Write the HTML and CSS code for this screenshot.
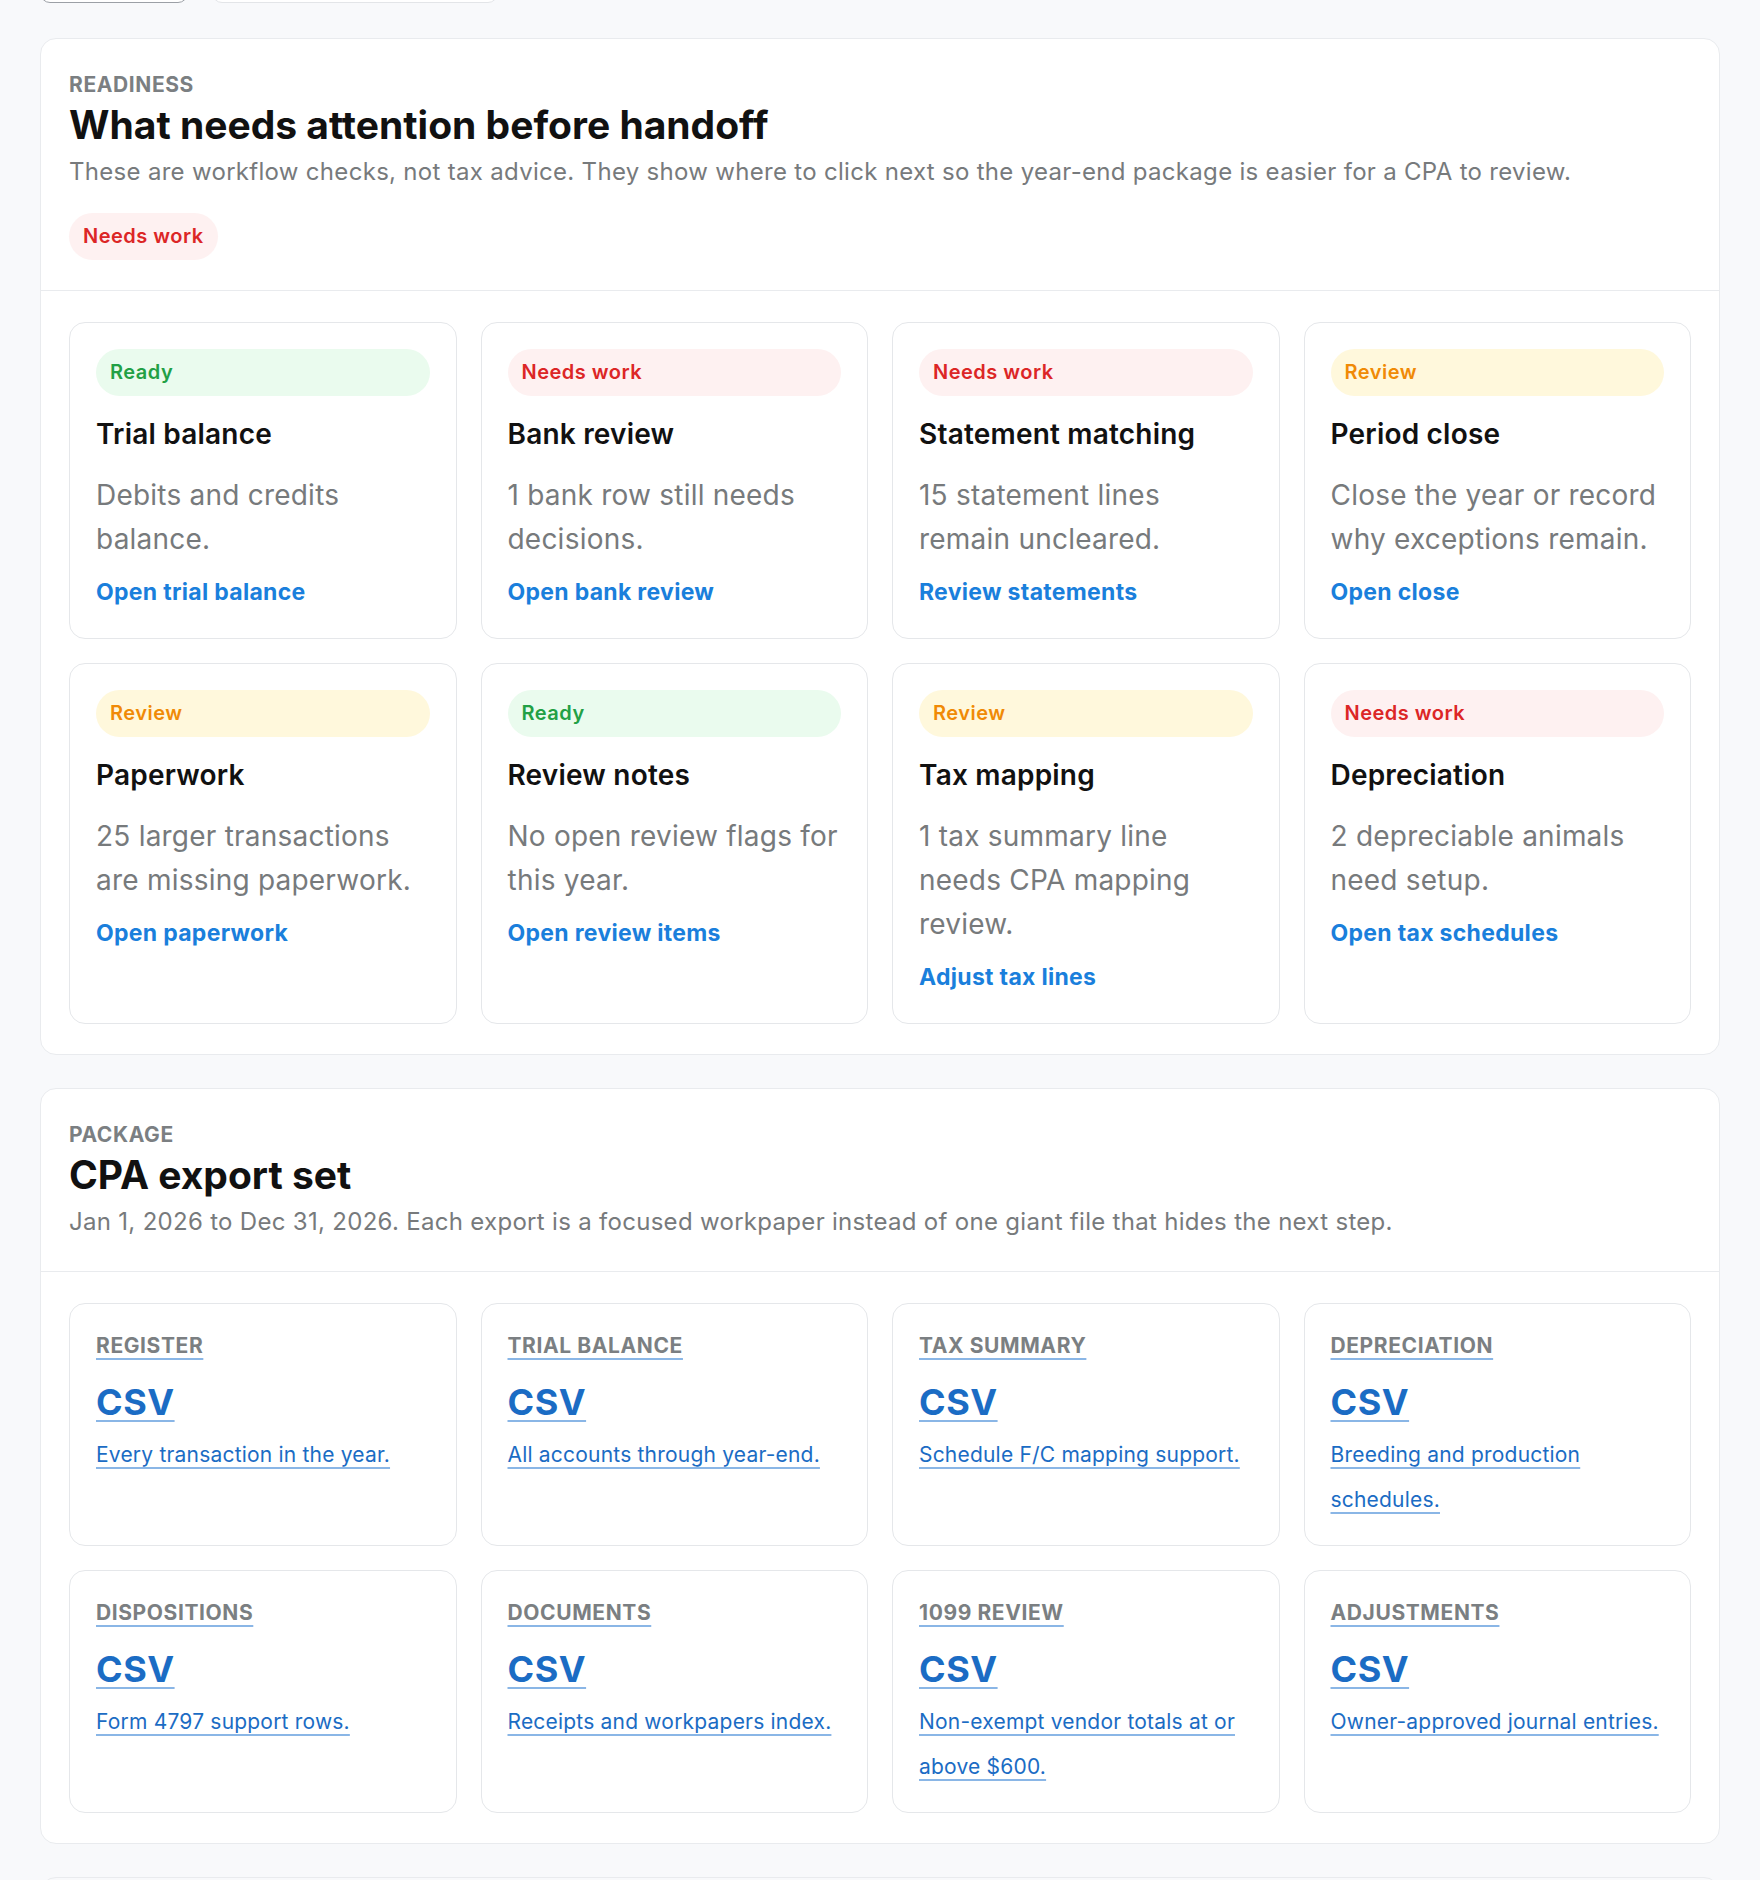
FILE: index.html
```
<!DOCTYPE html>
<html lang="en">
<head>
    <meta charset="UTF-8">
    <meta name="viewport" content="width=device-width, initial-scale=1.0">
    <title>Year-end handoff</title>
    <link rel="stylesheet" href="styles.css">
</head>
<body>
    <div class="toolbar">
        <button class="tool-btn active" aria-label="Back"></button>
        <button class="tool-btn wide" aria-label="Tax year"></button>
    </div>

    <section class="panel">
        <div class="panel-head">
            <div class="eyebrow">Readiness</div>
            <h2>What needs attention before handoff</h2>
            <p class="lead">These are workflow checks, not tax advice. They show where to click next so the year-end package is easier for a CPA to review.</p>
            <span class="badge bad">Needs work</span>
        </div>
        <div class="panel-body">
            <div class="grid">
                <div class="check">
                    <span class="pill ok">Ready</span>
                    <h3>Trial balance</h3>
                    <p>Debits and credits balance.</p>
                    <a href="#" class="next">Open trial balance</a>
                </div>
                <div class="check">
                    <span class="pill bad">Needs work</span>
                    <h3>Bank review</h3>
                    <p>1 bank row still needs decisions.</p>
                    <a href="#" class="next">Open bank review</a>
                </div>
                <div class="check">
                    <span class="pill bad">Needs work</span>
                    <h3>Statement matching</h3>
                    <p>15 statement lines remain uncleared.</p>
                    <a href="#" class="next">Review statements</a>
                </div>
                <div class="check">
                    <span class="pill warn">Review</span>
                    <h3>Period close</h3>
                    <p>Close the year or record why exceptions remain.</p>
                    <a href="#" class="next">Open close</a>
                </div>
                <div class="check">
                    <span class="pill warn">Review</span>
                    <h3>Paperwork</h3>
                    <p>25 larger transactions are missing paperwork.</p>
                    <a href="#" class="next">Open paperwork</a>
                </div>
                <div class="check">
                    <span class="pill ok">Ready</span>
                    <h3>Review notes</h3>
                    <p>No open review flags for this year.</p>
                    <a href="#" class="next">Open review items</a>
                </div>
                <div class="check">
                    <span class="pill warn">Review</span>
                    <h3>Tax mapping</h3>
                    <p>1 tax summary line needs CPA mapping review.</p>
                    <a href="#" class="next">Adjust tax lines</a>
                </div>
                <div class="check">
                    <span class="pill bad">Needs work</span>
                    <h3>Depreciation</h3>
                    <p>2 depreciable animals need setup.</p>
                    <a href="#" class="next">Open tax schedules</a>
                </div>
            </div>
        </div>
    </section>

    <section class="panel">
        <div class="panel-head">
            <div class="eyebrow">Package</div>
            <h2>CPA export set</h2>
            <p class="lead">Jan 1, 2026 to Dec 31, 2026. Each export is a focused workpaper instead of one giant file that hides the next step.</p>
        </div>
        <div class="panel-body">
            <div class="grid">
                <a href="#" class="export">
                    <span class="kind">Register</span>
                    <span class="fmt">CSV</span>
                    <span class="what">Every transaction in the year.</span>
                </a>
                <a href="#" class="export">
                    <span class="kind">Trial balance</span>
                    <span class="fmt">CSV</span>
                    <span class="what">All accounts through year-end.</span>
                </a>
                <a href="#" class="export">
                    <span class="kind">Tax summary</span>
                    <span class="fmt">CSV</span>
                    <span class="what">Schedule F/C mapping support.</span>
                </a>
                <a href="#" class="export">
                    <span class="kind">Depreciation</span>
                    <span class="fmt">CSV</span>
                    <span class="what">Breeding and production schedules.</span>
                </a>
                <a href="#" class="export">
                    <span class="kind">Dispositions</span>
                    <span class="fmt">CSV</span>
                    <span class="what">Form 4797 support rows.</span>
                </a>
                <a href="#" class="export">
                    <span class="kind">Documents</span>
                    <span class="fmt">CSV</span>
                    <span class="what">Receipts and workpapers index.</span>
                </a>
                <a href="#" class="export">
                    <span class="kind">1099 review</span>
                    <span class="fmt">CSV</span>
                    <span class="what">Non-exempt vendor totals at or above $600.</span>
                </a>
                <a href="#" class="export">
                    <span class="kind">Adjustments</span>
                    <span class="fmt">CSV</span>
                    <span class="what">Owner-approved journal entries.</span>
                </a>
            </div>
        </div>
    </section>

    <section class="panel stub"></section>
</body>
</html>
```

FILE: styles.css
```
body {
    font-family: Inter, "Noto Sans", sans-serif;
    background-color: #f8f9fb;
    margin: 0;
    padding: 0 40px 0 40px;
    color: #111;
}
.toolbar {
    display: flex;
    gap: 24px;
    margin-top: -40px;
    height: 43px;
}
.tool-btn {
    width: 148px;
    height: 43px;
    border: 1px solid #e3e5e8;
    border-radius: 10px;
    background: #fff;
}
.tool-btn.active {
    border-color: #9ca0a6;
}
.tool-btn.wide {
    width: 286px;
}
.panel {
    background: #fff;
    border: 1px solid #e9ebee;
    border-radius: 16px;
    margin-top: 35px;
}
.panel + .panel {
    margin-top: 33px;
}
.panel-head {
    padding: 32px 28px 30px;
    border-bottom: 1px solid #e9ebee;
}
.eyebrow {
    font-size: 21px;
    font-weight: 700;
    text-transform: uppercase;
    color: #7b7f82;
    line-height: 28px;
    letter-spacing: 0.6px;
}
h2 {
    margin: 0;
    font-size: 39px;
    font-weight: 700;
    letter-spacing: 0;
    line-height: 51px;
}
.lead {
    margin: 3px 0 0;
    font-size: 24px;
    line-height: 38px;
    color: #777a7c;
    letter-spacing: 0.3px;
}
.badge {
    display: inline-block;
    margin-top: 22px;
    height: 47px;
    line-height: 47px;
    padding: 0 14px;
    border-radius: 999px;
    font-size: 20px;
    font-weight: 600;
    letter-spacing: 0.5px;
}
.bad {
    color: #dc2626;
    background: #fef1f1;
}
.ok {
    color: #22a045;
    background: #eafbee;
}
.warn {
    color: #f08a06;
    background: #fff8dc;
}
.panel-body {
    padding: 31px 28px 30px;
}
.grid {
    display: grid;
    grid-template-columns: repeat(4, 1fr);
    gap: 24px;
}
.check {
    border: 1px solid #e5e7ea;
    border-radius: 16px;
    padding: 26px 26px 30px;
    display: flex;
    flex-direction: column;
    align-items: flex-start;
}
.pill {
    display: block;
    align-self: stretch;
    height: 47px;
    line-height: 47px;
    padding: 0 14px;
    border-radius: 999px;
    font-size: 20px;
    font-weight: 600;
    letter-spacing: 0.5px;
}
.check h3 {
    margin: 20px 0 0;
    font-size: 28px;
    font-weight: 600;
    line-height: 36px;
    letter-spacing: 0.2px;
}
.check p {
    margin: 21px 0 0;
    font-size: 28px;
    line-height: 44px;
    color: #777a7c;
    letter-spacing: 0.22px;
}
.next {
    margin-top: 15px;
    font-size: 23px;
    font-weight: 700;
    line-height: 32px;
    color: #1a7fdc;
    text-decoration: none;
    letter-spacing: 0.3px;
}
.export {
    border: 1px solid #e5e7ea;
    border-radius: 16px;
    padding: 26px 26px 23px;
    display: flex;
    flex-direction: column;
    align-items: flex-start;
    text-decoration: none;
}
.export span {
    text-decoration: underline;
    text-decoration-color: #8ab6e6;
    text-decoration-thickness: 2px;
    text-underline-offset: 5px;
}
.kind {
    font-size: 21px;
    font-weight: 700;
    text-transform: uppercase;
    color: #7b7f82;
    line-height: 32px;
    letter-spacing: 0.6px;
}
.fmt {
    margin-top: 16px;
    font-size: 36px;
    font-weight: 700;
    line-height: 48px;
    color: #1b6cc4;
    letter-spacing: 0.5px;
}
.what {
    margin-top: 6px;
    font-size: 21px;
    line-height: 45px;
    color: #1b6cc4;
    letter-spacing: 0.2px;
}
.stub {
    height: 40px;
    border-radius: 16px 16px 0 0;
    background: #f8f9fb;
}
```
